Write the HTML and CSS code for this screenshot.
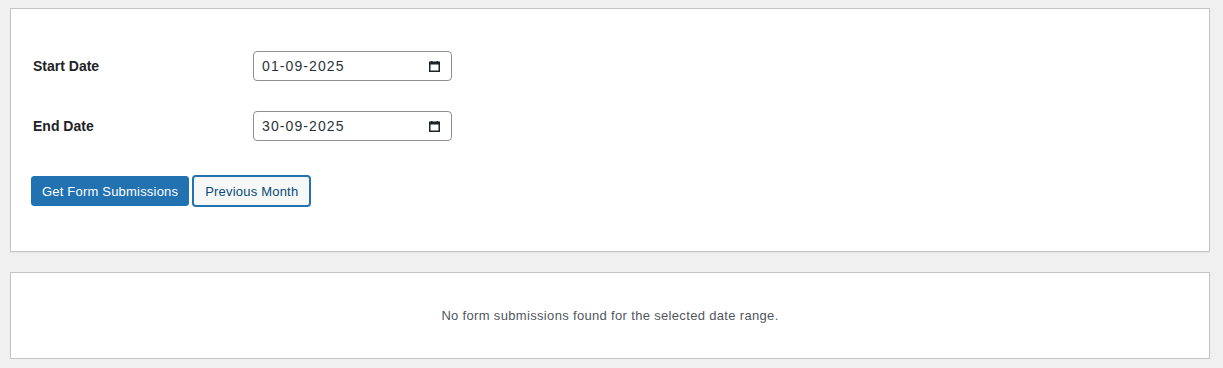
FILE: index.html
```html
<!DOCTYPE html>
<html>
<head>
    <meta charset="utf-8">
    <title>Form Submissions</title>
<link rel="stylesheet" href="styles.css">
</head>
<body>
<div class="wrap">

    <div class="card filter-card">
        <div class="field-row">
            <label class="field-label" for="start">Start Date</label>
            <div class="date-field">
                <input type="text" id="start" value="01-09-2025" readonly>
                <svg class="cal-icon" width="11" height="11" viewBox="0 0 11 11"><path d="M2 0h1.5v1.5h-1.5zM7.5 0h1.5v1.5h-1.5z" fill="#1d2327"/><rect x="0.75" y="1.25" width="9.5" height="9" fill="none" stroke="#1d2327" stroke-width="1.5"/><rect x="0.5" y="1" width="10" height="2.5" fill="#1d2327"/></svg>
            </div>
        </div>
        <div class="field-row">
            <label class="field-label" for="end">End Date</label>
            <div class="date-field">
                <input type="text" id="end" value="30-09-2025" readonly>
                <svg class="cal-icon" width="11" height="11" viewBox="0 0 11 11"><path d="M2 0h1.5v1.5h-1.5zM7.5 0h1.5v1.5h-1.5z" fill="#1d2327"/><rect x="0.75" y="1.25" width="9.5" height="9" fill="none" stroke="#1d2327" stroke-width="1.5"/><rect x="0.5" y="1" width="10" height="2.5" fill="#1d2327"/></svg>
            </div>
        </div>

        <div class="actions">
            <button type="button" class="button button-primary">Get Form Submissions</button>
            <button type="button" class="button button-secondary">Previous Month</button>
        </div>
    </div>

    <div class="card results-card">
        <p class="empty">No form submissions found for the selected date range.</p>
    </div>

</div>
</body>
</html>
```

FILE: styles.css
```css
*
{
  margin: 0;
  padding: 0;
  box-sizing: border-box;
}

body
{
  font-family: "Liberation Sans", Arial, sans-serif;
  font-size: 13px;
  color: #1d2327;
  background: #f0f0f1;
}

.wrap
{
  width: 1200px;
  margin: 8px 0 0 10px;
  display: flex;
  flex-direction: column;
  gap: 20px;
}

.card
{
  background: #fff;
  border: 1px solid #c3c4c7;
  box-shadow: 0 1px 1px rgba(0,0,0,0.04);
}

.filter-card
{
  height: 244px;
  padding: 27px 22px 0;
}

.field-row
{
  display: flex;
  align-items: center;
  height: 60px;
}

.field-label
{
  width: 220px;
  font-size: 14px;
  font-weight: bold;
  color: #1d2327;
}

.date-field
{
  display: flex;
  align-items: center;
  width: 199px;
  height: 30px;
  border: 1px solid #8c8f94;
  border-radius: 4px;
  padding: 0 11px 0 8px;
  background: #fff;
}

.date-field input
{
  flex: 1;
  min-width: 0;
  border: 0;
  outline: none;
  font-family: inherit;
  font-size: 14px;
  color: #2c3338;
  letter-spacing: 1.1px;
  background: transparent;
}

.cal-icon
{
  flex: none;
}

.actions
{
  display: flex;
  gap: 3px;
  margin-top: 20px;
  margin-left: -2px;
}

.button
{
  height: 30px;
  padding: 0 10px;
  font-family: inherit;
  font-size: 13px;
  letter-spacing: 0.2px;
  border-radius: 3px;
  cursor: pointer;
}

.button-primary
{
  background: #2271b1;
  border: 1px solid #2271b1;
  color: #fff;
}

.button-secondary
{
  background: #f6f7f7;
  border: 1px solid #2271b1;
  box-shadow: 0 0 0 1px #2271b1;
  color: #0a4b78;
  margin-left: 1px;
  padding: 0 11px;
}

.results-card
{
  height: 87px;
  display: flex;
  align-items: center;
  justify-content: center;
}

.empty
{
  color: #50575e;
  font-size: 13px;
  letter-spacing: 0.33px;
}
```
